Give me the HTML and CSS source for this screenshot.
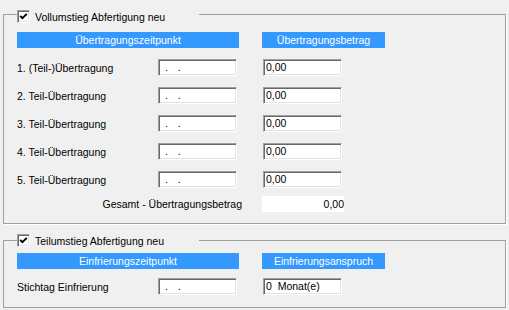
FILE: index.html
```html
<!DOCTYPE html>
<html lang="de">
<head>
    <meta charset="UTF-8">
    <title>Abfertigung neu</title>
    <link rel="stylesheet" href="styles.css">
</head>
<body>
    <div class="group group-full">
        <div class="caption">
            <span class="check"><svg width="9" height="9" viewBox="0 0 9 9"><polyline points="1.2,3.8 3.4,6.2 7.8,1.8" fill="none" stroke="#000" stroke-width="1.9"/></svg></span>
            <span>Vollumstieg Abfertigung neu</span>
        </div>
        <div class="heads">
            <div class="head head-wide">Übertragungszeitpunkt</div>
            <div class="head head-narrow">Übertragungsbetrag</div>
        </div>
        <div class="rows">
            <div class="row">
                <span class="label">1. (Teil-)Übertragung</span>
                <span class="field date">. .</span>
                <span class="field amount">0,00</span>
            </div>
            <div class="row">
                <span class="label">2. Teil-Übertragung</span>
                <span class="field date">. .</span>
                <span class="field amount">0,00</span>
            </div>
            <div class="row">
                <span class="label">3. Teil-Übertragung</span>
                <span class="field date">. .</span>
                <span class="field amount">0,00</span>
            </div>
            <div class="row">
                <span class="label">4. Teil-Übertragung</span>
                <span class="field date">. .</span>
                <span class="field amount">0,00</span>
            </div>
            <div class="row">
                <span class="label">5. Teil-Übertragung</span>
                <span class="field date">. .</span>
                <span class="field amount">0,00</span>
            </div>
            <div class="total">
                <span class="total-label">Gesamt - Übertragungsbetrag</span>
                <span class="total-value">0,00</span>
            </div>
        </div>
    </div>

    <div class="group group-part">
        <div class="caption">
            <span class="check"><svg width="9" height="9" viewBox="0 0 9 9"><polyline points="1.2,3.8 3.4,6.2 7.8,1.8" fill="none" stroke="#000" stroke-width="1.9"/></svg></span>
            <span>Teilumstieg Abfertigung neu</span>
        </div>
        <div class="heads">
            <div class="head head-wide">Einfrierungszeitpunkt</div>
            <div class="head head-narrow">Einfrierungsanspruch</div>
        </div>
        <div class="rows">
            <div class="row">
                <span class="label">Stichtag Einfrierung</span>
                <span class="field date">. .</span>
                <span class="field amount">0&nbsp;&nbsp;Monat(e)</span>
            </div>
        </div>
    </div>
</body>
</html>
```

FILE: styles.css
```css
body {
    margin: 0;
    background: #f0f0f0;
    font-family: "Liberation Sans", Arial, sans-serif;
    font-size: 10.5px;
    color: #000;
}
.group {
    border: 1px solid #a0a0a0;
    box-shadow: 1px 1px 0 #fff;
    margin: 14px 3px 0;
    padding: 0 0 11px 13px;
}
.caption {
    display: flex;
    align-items: center;
    gap: 5px;
    width: 182px;
    height: 13px;
    margin-top: -5px;
    background: #f0f0f0;
}
.check {
    display: flex;
    align-items: center;
    justify-content: center;
    width: 13px;
    height: 13px;
    box-sizing: border-box;
    background: #fff;
    border: 1px solid;
    border-color: #a0a0a0 #fff #fff #a0a0a0;
    box-shadow: inset 1px 1px 0 #696969, inset -1px -1px 0 #e3e3e3;
}
.heads {
    display: flex;
    gap: 23px;
    margin-top: 9px;
}
.head {
    height: 16px;
    line-height: 16px;
    background: #3399ff;
    color: #fff;
    text-align: center;
}
.head-wide {
    width: 222px;
}
.head-narrow {
    width: 123px;
}
.rows {
    display: flex;
    flex-direction: column;
    gap: 11px;
    margin-top: 11px;
}
.row {
    display: flex;
    align-items: center;
    height: 17px;
}
.label {
    width: 141px;
}
.field {
    width: 79px;
    height: 17px;
    box-sizing: border-box;
    line-height: 15px;
    background: #fff;
    border: 1px solid;
    border-color: #a0a0a0 #fff #fff #a0a0a0;
    box-shadow: inset 1px 1px 0 #696969, inset -1px -1px 0 #e3e3e3;
    white-space: pre;
}
.date {
    padding-left: 6px;
    word-spacing: 7px;
}
.amount {
    margin-left: 26px;
    padding-left: 2px;
}
.total {
    display: flex;
    align-items: center;
    margin-top: -3px;
}
.total-label {
    width: 225px;
    margin-right: 20px;
    text-align: right;
}
.total-value {
    width: 82px;
    height: 16px;
    line-height: 16px;
    background: #fff;
    text-align: right;
}
.group-part {
    margin-top: 16px;
    padding-bottom: 12px;
}
.group-part .caption {
    margin-top: -7px;
}
.group-part .heads {
    margin-top: 6px;
}
.group-part .rows {
    margin-top: 9px;
}
```
